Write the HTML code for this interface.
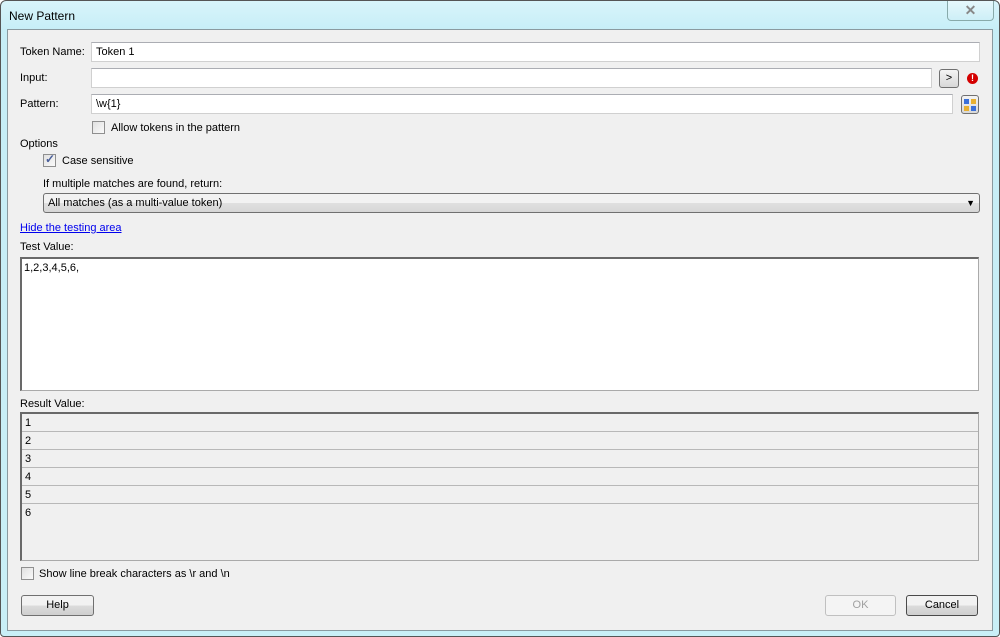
<!DOCTYPE html>
<html><head><style>
*{box-sizing:border-box;margin:0;padding:0}
body{width:1000px;height:637px;background:#fff;font-family:"Liberation Sans",sans-serif;font-size:11px;color:#000;position:relative;overflow:hidden}
.frame{position:absolute;left:0;top:0;width:1000px;height:637px;border:1px solid #555;border-radius:6px 6px 4px 4px;background:linear-gradient(#d8f4fa,#c6eef7 30px,#c9eff7)}
.client{position:absolute;left:7px;top:29px;width:986px;height:602px;background:#f0f0f0;border:1px solid #8a9aa0}
.a{position:absolute}
.in{position:absolute;background:#fff;border:1px solid #d0d0d0;border-top-color:#abadb3;height:20px;padding:3px 4px;font-size:11px}
.cb{position:absolute;width:13px;height:13px;border:1px solid #8f8f8f;background:linear-gradient(135deg,#e0e0e0,#fafafa)}
.btn{position:absolute;height:21px;border:1px solid #707070;border-radius:3px;background:linear-gradient(#f2f2f2 50%,#dcdcdc 50%,#cfcfcf);text-align:center;line-height:19px;font-size:11px}
.row{position:absolute;left:0;width:100%;height:18px;border-bottom:1px solid #b8b8b8;padding:3px 3px;font-size:11px}
</style></head><body>
<div class="frame">
<div class="a" style="left:8px;top:8px;font-size:12px">New Pattern</div>
<div class="a" style="left:946px;top:0;width:47px;height:20px;border:1px solid #8aa;border-top:none;border-radius:0 0 4px 4px;background:linear-gradient(#e6f8fc,#cdeff7);text-align:center;font-size:14px;font-weight:bold;color:#888;line-height:19px">✕</div>
</div>
<div class="client"></div>
<div class="a" style="left:20px;top:46px">Token Name:</div>
<div class="in" style="left:91px;top:42px;width:889px">Token 1</div>
<div class="a" style="left:20px;top:72px">Input:</div>
<div class="in" style="left:91px;top:68px;width:841px"></div>
<div class="btn" style="left:939px;top:69px;width:20px;height:19px;line-height:16px;background:linear-gradient(#f4f4f4,#d8d8d8)">&gt;</div>
<div class="a" style="left:967px;top:73px;width:11px;height:11px;border-radius:50%;background:#d40000;color:#fff;font-weight:bold;font-size:9px;text-align:center;line-height:11px">!</div>
<div class="a" style="left:20px;top:98px">Pattern:</div>
<div class="in" style="left:91px;top:94px;width:862px">\w{1}</div>
<div class="btn" style="left:961px;top:95px;width:18px;height:19px;background:linear-gradient(#f4f4f4,#d8d8d8)">
<svg width="14" height="14" style="position:absolute;left:1px;top:2px"><rect x="1" y="1" width="5" height="5" fill="#3a6fd8"/><rect x="8" y="1" width="5" height="5" fill="#e8b030"/><rect x="1" y="8" width="5" height="5" fill="#e8b030"/><rect x="8" y="8" width="5" height="5" fill="#3a6fd8"/></svg></div>
<div class="cb" style="left:92px;top:121px"></div>
<div class="a" style="left:111px;top:122px">Allow tokens in the pattern</div>
<div class="a" style="left:20px;top:138px">Options</div>
<div class="cb" style="left:43px;top:154px"><span style="position:absolute;left:1px;top:-3px;color:#4a5f9a;font-size:12px;font-weight:bold">✓</span></div>
<div class="a" style="left:62px;top:155px">Case sensitive</div>
<div class="a" style="left:43px;top:178px">If multiple matches are found, return:</div>
<div class="btn" style="left:43px;top:193px;width:937px;height:20px;text-align:left;padding-left:4px;line-height:18px;background:linear-gradient(#f2f2f2 50%,#e0e0e0 50%,#d6d6d6)">All matches (as a multi-value token)<span style="position:absolute;right:4px;top:0;font-size:9px">▼</span></div>
<div class="a" style="left:20px;top:222px;color:#0000ee;text-decoration:underline">Hide the testing area</div>
<div class="a" style="left:20px;top:241px">Test Value:</div>
<div class="a" style="left:20px;top:257px;width:959px;height:134px;background:#fff;border:1px solid #aaa;border-top:2px solid #696969;border-left:2px solid #696969;padding:3px 2px">1,2,3,4,5,6,</div>
<div class="a" style="left:20px;top:398px">Result Value:</div>
<div class="a" style="left:20px;top:412px;width:959px;height:149px;background:#f0f0f0;border:1px solid #aaa;border-top:2px solid #696969;border-left:2px solid #696969">
<div class="row" style="top:0">1</div><div class="row" style="top:18px">2</div><div class="row" style="top:36px">3</div><div class="row" style="top:54px">4</div><div class="row" style="top:72px">5</div><div class="row" style="top:90px;border:none">6</div>
</div>
<div class="cb" style="left:21px;top:567px"></div>
<div class="a" style="left:39px;top:568px">Show line break characters as \r and \n</div>
<div class="btn" style="left:21px;top:595px;width:73px">Help</div>
<div class="btn" style="left:825px;top:595px;width:71px;color:#a0a0a0;border-color:#c0c0c0;background:#f4f4f4">OK</div>
<div class="btn" style="left:906px;top:595px;width:72px;border-color:#4a4a4a">Cancel</div>
</body></html>
